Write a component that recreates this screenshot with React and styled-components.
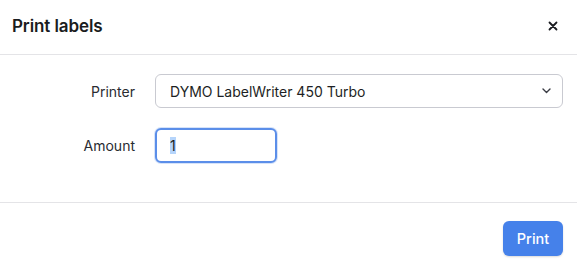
import React, { useEffect, useRef } from 'react';
import styled, { createGlobalStyle } from 'styled-components';

const GlobalStyle = createGlobalStyle`
  * { box-sizing: border-box; }
  html, body { margin: 0; padding: 0; background: #fff; }
  body {
    font-family: Inter, "Noto Sans", sans-serif;
    color: #1d1f24;
    -webkit-font-smoothing: antialiased;
  }
`;

const Dialog = styled.div`
  width: 577px;
  height: 270px;
  display: flex;
  flex-direction: column;
  background: #fff;
`;

const Header = styled.div`
  height: 55px;
  display: flex;
  align-items: center;
  justify-content: space-between;
  padding: 0 14px 2px 12px;
  border-bottom: 1px solid #e4e4e7;
`;

const Title = styled.h2`
  margin: 0;
  font-size: 17px;
  font-weight: 600;
  letter-spacing: -0.1px;
  color: #1a1c20;
`;

const CloseButton = styled.button`
  width: 20px;
  height: 20px;
  padding: 0;
  border: 0;
  background: transparent;
  display: flex;
  align-items: center;
  justify-content: center;
  cursor: pointer;
  color: #1a1c20;
`;

const Body = styled.div`
  display: grid;
  grid-template-columns: 135px 1fr;
  column-gap: 20px;
  row-gap: 20px;
  align-items: center;
  padding: 19px 14px 39px 0;
  border-bottom: 1px solid #e4e4e7;
`;

const Label = styled.label`
  text-align: right;
  font-size: 14px;
  color: #2a2c31;
`;

const SelectWrap = styled.div`
  position: relative;
  height: 34px;
`;

const Select = styled.select`
  appearance: none;
  width: 100%;
  height: 100%;
  padding: 0 36px 0 14px;
  font-family: inherit;
  font-size: 14px;
  color: #1d1f24;
  background: #fff;
  border: 1px solid #c9cad1;
  border-radius: 6px;
  outline: none;
`;

const Chevron = styled.svg`
  position: absolute;
  right: 12px;
  top: 50%;
  transform: translateY(-50%);
  pointer-events: none;
`;

const AmountInput = styled.input`
  display: block;
  width: 122px;
  height: 35px;
  padding: 0 13px;
  font-family: inherit;
  font-size: 14px;
  color: #1d1f24;
  background: #fff;
  border: 2px solid ${(p) => (p.$active ? '#5b8ee9' : '#c9cad1')};
  border-radius: 6px;
  outline: none;
  box-shadow: ${(p) => (p.$active ? '0 0 0 1px rgba(91,142,233,0.25)' : 'none')};

  &::selection {
    background: #b6d5fb;
    color: #1d1f24;
  }
`;

const Footer = styled.div`
  flex: 1;
  display: flex;
  justify-content: flex-end;
  align-items: flex-start;
  padding: 18px 14px 0 0;
`;

const PrimaryButton = styled.button`
  width: 60px;
  height: 35px;
  border: 0;
  border-radius: 6px;
  background: #4581ea;
  color: #fff;
  font-family: inherit;
  font-size: 14.5px;
  font-weight: 500;
  box-shadow: 0 1px 2px rgba(0, 0, 0, 0.15);
  cursor: pointer;
`;

export default function App() {
  const amountRef = useRef(null);

  useEffect(() => {
    if (amountRef.current) {
      amountRef.current.focus();
      amountRef.current.select();
    }
  }, []);

  return (
    <>
      <GlobalStyle />
      <Dialog>
        <Header>
          <Title>Print labels</Title>
          <CloseButton aria-label="Close">
            <svg width="10" height="10" viewBox="0 0 10 10">
              <path d="M1.5 1.5 L8.5 8.5 M8.5 1.5 L1.5 8.5" stroke="currentColor" strokeWidth="1.8" strokeLinecap="round" />
            </svg>
          </CloseButton>
        </Header>
        <Body>
          <Label htmlFor="printer">Printer</Label>
          <SelectWrap>
            <Select id="printer" defaultValue="dymo450t">
              <option value="dymo450t">DYMO LabelWriter 450 Turbo</option>
            </Select>
            <Chevron width="9" height="6" viewBox="0 0 9 6">
              <path d="M1 1 L4.5 4.5 L8 1" fill="none" stroke="#3a3c44" strokeWidth="1.4" strokeLinecap="round" strokeLinejoin="round" />
            </Chevron>
          </SelectWrap>
          <Label htmlFor="amount">Amount</Label>
          <div>
            <AmountInput id="amount" ref={amountRef} defaultValue="1" $active />
          </div>
        </Body>
        <Footer>
          <PrimaryButton>Print</PrimaryButton>
        </Footer>
      </Dialog>
    </>
  );
}
